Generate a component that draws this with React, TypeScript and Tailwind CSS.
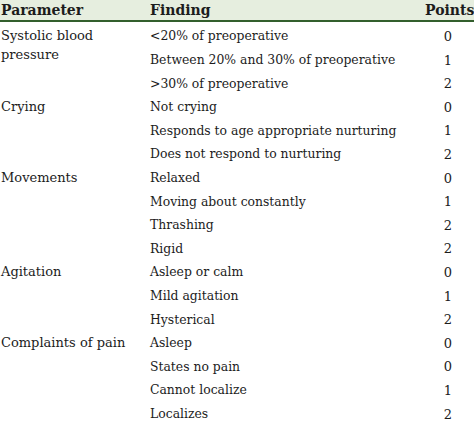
import React from "react";

const GROUPS = [
  {
    name: ["Systolic blood", "pressure"],
    rows: [
      ["<20% of preoperative", "0"],
      ["Between 20% and 30% of preoperative", "1"],
      [">30% of preoperative", "2"],
    ],
  },
  {
    name: ["Crying"],
    rows: [
      ["Not crying", "0"],
      ["Responds to age appropriate nurturing", "1"],
      ["Does not respond to nurturing", "2"],
    ],
  },
  {
    name: ["Movements"],
    rows: [
      ["Relaxed", "0"],
      ["Moving about constantly", "1"],
      ["Thrashing", "2"],
      ["Rigid", "2"],
    ],
  },
  {
    name: ["Agitation"],
    rows: [
      ["Asleep or calm", "0"],
      ["Mild agitation", "1"],
      ["Hysterical", "2"],
    ],
  },
  {
    name: ["Complaints of pain"],
    rows: [
      ["Asleep", "0"],
      ["States no pain", "0"],
      ["Cannot localize", "1"],
      ["Localizes", "2"],
    ],
  },
];

export default function App() {
  return (
    <div className="w-[474px] h-[423px] overflow-hidden bg-white text-[#1c1c1c] text-[13px] font-['DejaVu_Serif',serif]">
      {/* Header */}
      <div className="flex items-center h-[22px] bg-[#e6eedf] border-b-2 border-[#335f2d] font-bold text-[14px]">
        <div className="w-[150px] pl-px">Parameter</div>
        <div className="flex-1">Finding</div>
        <div className="w-[52px] pl-[3px] whitespace-nowrap">Points</div>
      </div>

      <div className="mt-[3px]">
        {GROUPS.map((g) => (
          <div key={g.name.join(" ")} className="flex">
            <div className="w-[150px] pl-px pt-[1px] leading-[19px]">
              {g.name.map((n) => (
                <div key={n}>{n}</div>
              ))}
            </div>
            <div className="flex-1">
              {g.rows.map(([f, p]) => (
                <div key={f} className="flex items-center h-[23.6px]">
                  <div className="flex-1 text-[12.4px]">{f}</div>
                  <div className="w-[52px] text-center">{p}</div>
                </div>
              ))}
            </div>
          </div>
        ))}
      </div>
    </div>
  );
}
